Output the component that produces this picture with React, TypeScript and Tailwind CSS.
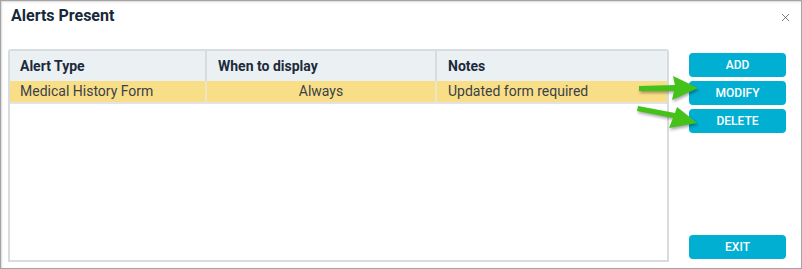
import { X } from 'lucide-react';

const rows = [
  { type: 'Medical History Form', when: 'Always', notes: 'Updated form required' },
];

const ActionButton = ({ label }: { label: string }) => (
  <button className="h-[24px] w-[97px] rounded-[4px] bg-[#01afd2] text-[12px] font-medium text-white">
    {label}
  </button>
);

const App = () => {
  return (
    <div
      className="relative h-[269px] w-[802px] bg-white"
      style={{ fontFamily: 'Roboto, "Liberation Sans", sans-serif' }}
    >
      <div className="flex h-full w-full flex-col border border-[#a3a3a3] shadow-[inset_1px_1px_2px_rgba(0,0,0,0.15)]">
        <div className="flex h-[48px] items-start justify-between pl-[10px] pr-[9px] pt-[5px]">
          <h1 className="text-[16px] font-bold leading-[20px] text-[#17283a]">Alerts Present</h1>
          <X className="mt-[5px] h-[13px] w-[13px] text-[#444]" strokeWidth={1.3} />
        </div>

        <div className="flex flex-1 pb-[6px] pl-[7px] pr-[14px]">
          <div className="flex w-[661px] flex-col rounded-t-[3px] border-2 border-[#d6dcdf]">
            <div className="grid h-[30px] grid-cols-[197px_230px_1fr] bg-[#ebf0f3] text-[14px] font-bold text-[#1b2b3b]">
              <div className="flex items-center border-r-2 border-[#d6dcdf] pl-[10px]">Alert Type</div>
              <div className="flex items-center border-r-2 border-[#d6dcdf] pl-[11px]">When to display</div>
              <div className="flex items-center pl-[11px]">Notes</div>
            </div>
            {rows.map((r) => (
              <div
                key={r.type}
                className="grid h-[23px] grid-cols-[197px_230px_1fr] border-b-2 border-[#e3e3e3] bg-[#f9de88] text-[14px] text-[#3b4148]"
              >
                <div className="flex items-center border-r-2 border-[#eee5c8] pl-[10px]">{r.type}</div>
                <div className="flex items-center justify-center border-r-2 border-[#eee5c8]">{r.when}</div>
                <div className="flex items-center pl-[11px]">{r.notes}</div>
              </div>
            ))}
            <div className="flex-1 bg-white" />
          </div>

          <div className="ml-[20px] flex flex-col justify-between pb-[3px] pt-[4px]">
            <div className="flex flex-col gap-[4px]">
              <ActionButton label="ADD" />
              <ActionButton label="MODIFY" />
              <ActionButton label="DELETE" />
            </div>
            <ActionButton label="EXIT" />
          </div>
        </div>
      </div>

      {/* green callout arrows */}
      <svg
        className="pointer-events-none absolute left-0 top-0"
        width="802"
        height="269"
        style={{ filter: 'drop-shadow(1px 2px 1.5px rgba(0,0,0,0.35))' }}
      >
        <path d="M639 86 L675 85 L673 76 L698 88 L672 100 L674 91 L639 91 Z" fill="#45c21a" />
        <path d="M638 106 L675 113 L677 107 L697 123 L669 128 L673 118 L637 111 Z" fill="#45c21a" />
      </svg>
    </div>
  );
};

export default App;
